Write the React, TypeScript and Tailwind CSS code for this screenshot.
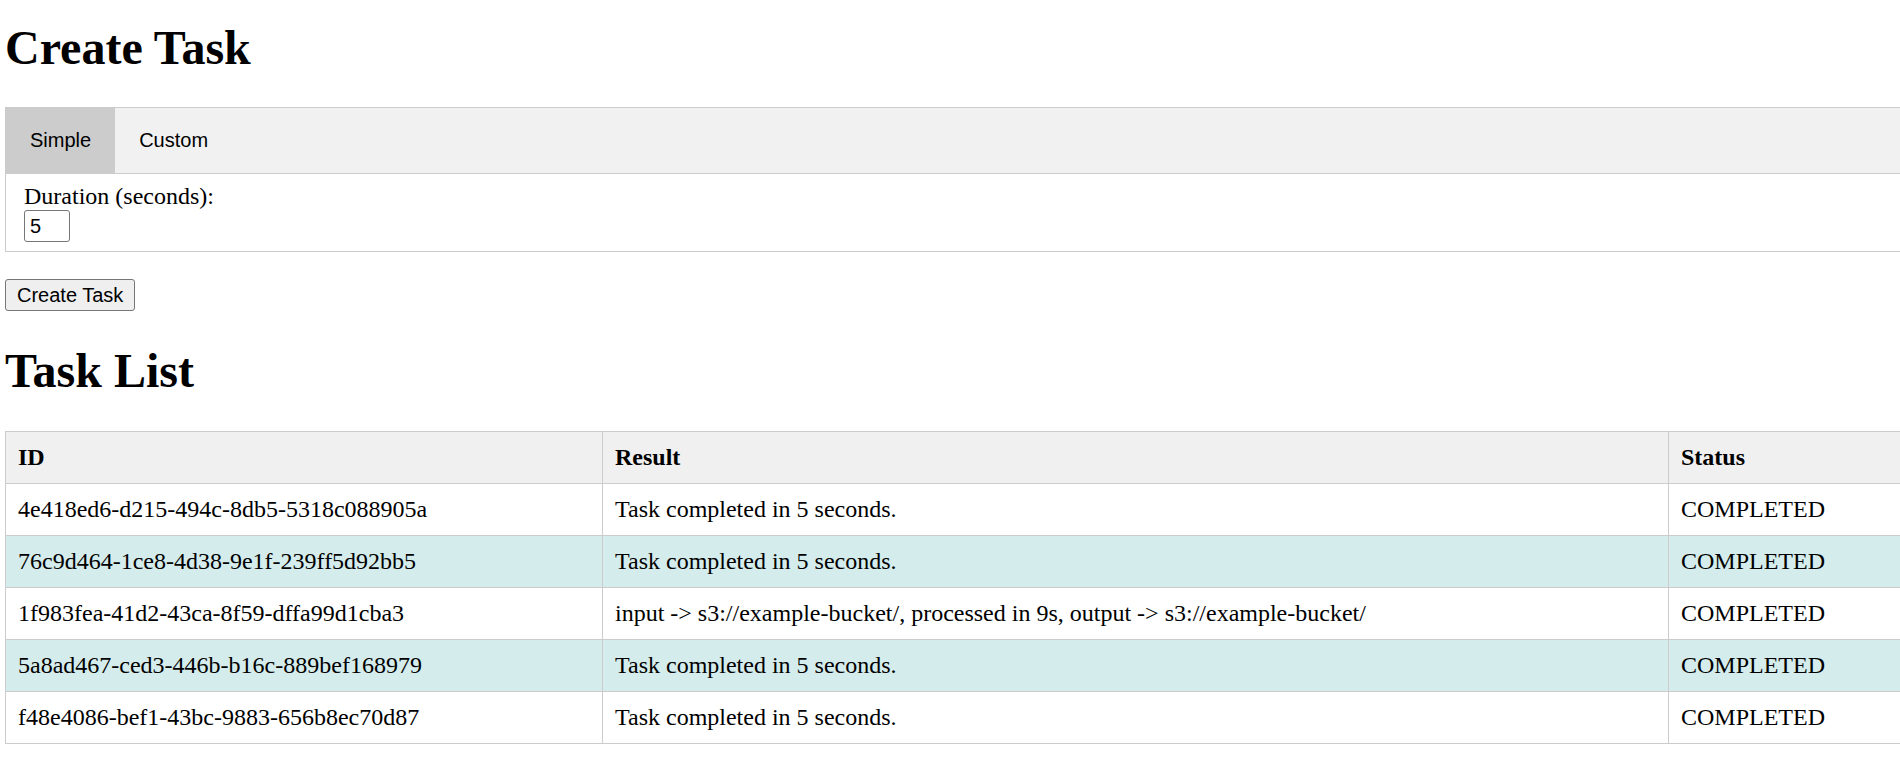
import { useState } from "react";

const tasks = [
  { id: "4e418ed6-d215-494c-8db5-5318c088905a", result: "Task completed in 5 seconds.", status: "COMPLETED" },
  { id: "76c9d464-1ce8-4d38-9e1f-239ff5d92bb5", result: "Task completed in 5 seconds.", status: "COMPLETED" },
  {
    id: "1f983fea-41d2-43ca-8f59-dffa99d1cba3",
    result: "input -> s3://example-bucket/, processed in 9s, output -> s3://example-bucket/",
    status: "COMPLETED",
  },
  { id: "5a8ad467-ced3-446b-b16c-889bef168979", result: "Task completed in 5 seconds.", status: "COMPLETED" },
  { id: "f48e4086-bef1-43bc-9883-656b8ec70d87", result: "Task completed in 5 seconds.", status: "COMPLETED" },
];

export default function App() {
  const [tab, setTab] = useState("simple");
  const [duration, setDuration] = useState("5");

  return (
    <div className="overflow-hidden bg-white text-black font-['Liberation_Serif',serif]">
      <div className="w-[1910px] pl-[5px]">
        <h1 className="mt-[20px] mb-[32px] text-[48px] leading-[55px] font-bold">Create Task</h1>

        {/* Tabs */}
        <div className="flex bg-[#f1f1f1] border border-[#ccc] font-['Liberation_Sans',Arial,sans-serif]">
          <button
            onClick={() => setTab("simple")}
            className={`px-[24px] py-[21px] text-[20px] leading-[23px] ${tab === "simple" ? "bg-[#ccc]" : ""}`}
          >
            Simple
          </button>
          <button
            onClick={() => setTab("custom")}
            className={`px-[24px] py-[21px] text-[20px] leading-[23px] ${tab === "custom" ? "bg-[#ccc]" : ""}`}
          >
            Custom
          </button>
        </div>
        <div className="border border-t-0 border-[#ccc] px-[18px] py-[9px]">
          <label className="block text-[24px] leading-[27px]">Duration (seconds):</label>
          <input
            value={duration}
            onChange={(e) => setDuration(e.target.value)}
            className="block w-[46px] h-[32px] border border-[#767676] rounded-[3px] px-[5px] text-[20px] font-['Liberation_Sans',Arial,sans-serif] outline-none"
          />
        </div>

        <button className="mt-[27px] h-[32px] px-[11px] bg-[#efefef] border border-[#767676] rounded-[3px] text-[20px] leading-[23px] font-['Liberation_Sans',Arial,sans-serif]">
          Create Task
        </button>

        <h2 className="mt-[32px] mb-[33px] text-[48px] leading-[55px] font-bold">Task List</h2>

        <table className="w-full table-fixed border-collapse text-[24px] leading-[27px]">
          <colgroup>
            <col className="w-[597px]" />
            <col className="w-[1066px]" />
            <col />
          </colgroup>
          <thead>
            <tr className="bg-[#f0f0f0]">
              <th className="border border-[#ccc] px-[12px] py-[12px] text-left font-bold">ID</th>
              <th className="border border-[#ccc] px-[12px] py-[12px] text-left font-bold">Result</th>
              <th className="border border-[#ccc] px-[12px] py-[12px] text-left font-bold">Status</th>
            </tr>
          </thead>
          <tbody>
            {tasks.map((t, i) => (
              <tr key={t.id} className={i % 2 === 1 ? "bg-[#d5ecec]" : "bg-white"}>
                <td className="border border-[#ccc] px-[12px] py-[12px]">{t.id}</td>
                <td className="border border-[#ccc] px-[12px] py-[12px]">{t.result}</td>
                <td className="border border-[#ccc] px-[12px] py-[12px]">{t.status}</td>
              </tr>
            ))}
          </tbody>
        </table>
      </div>
    </div>
  );
}
